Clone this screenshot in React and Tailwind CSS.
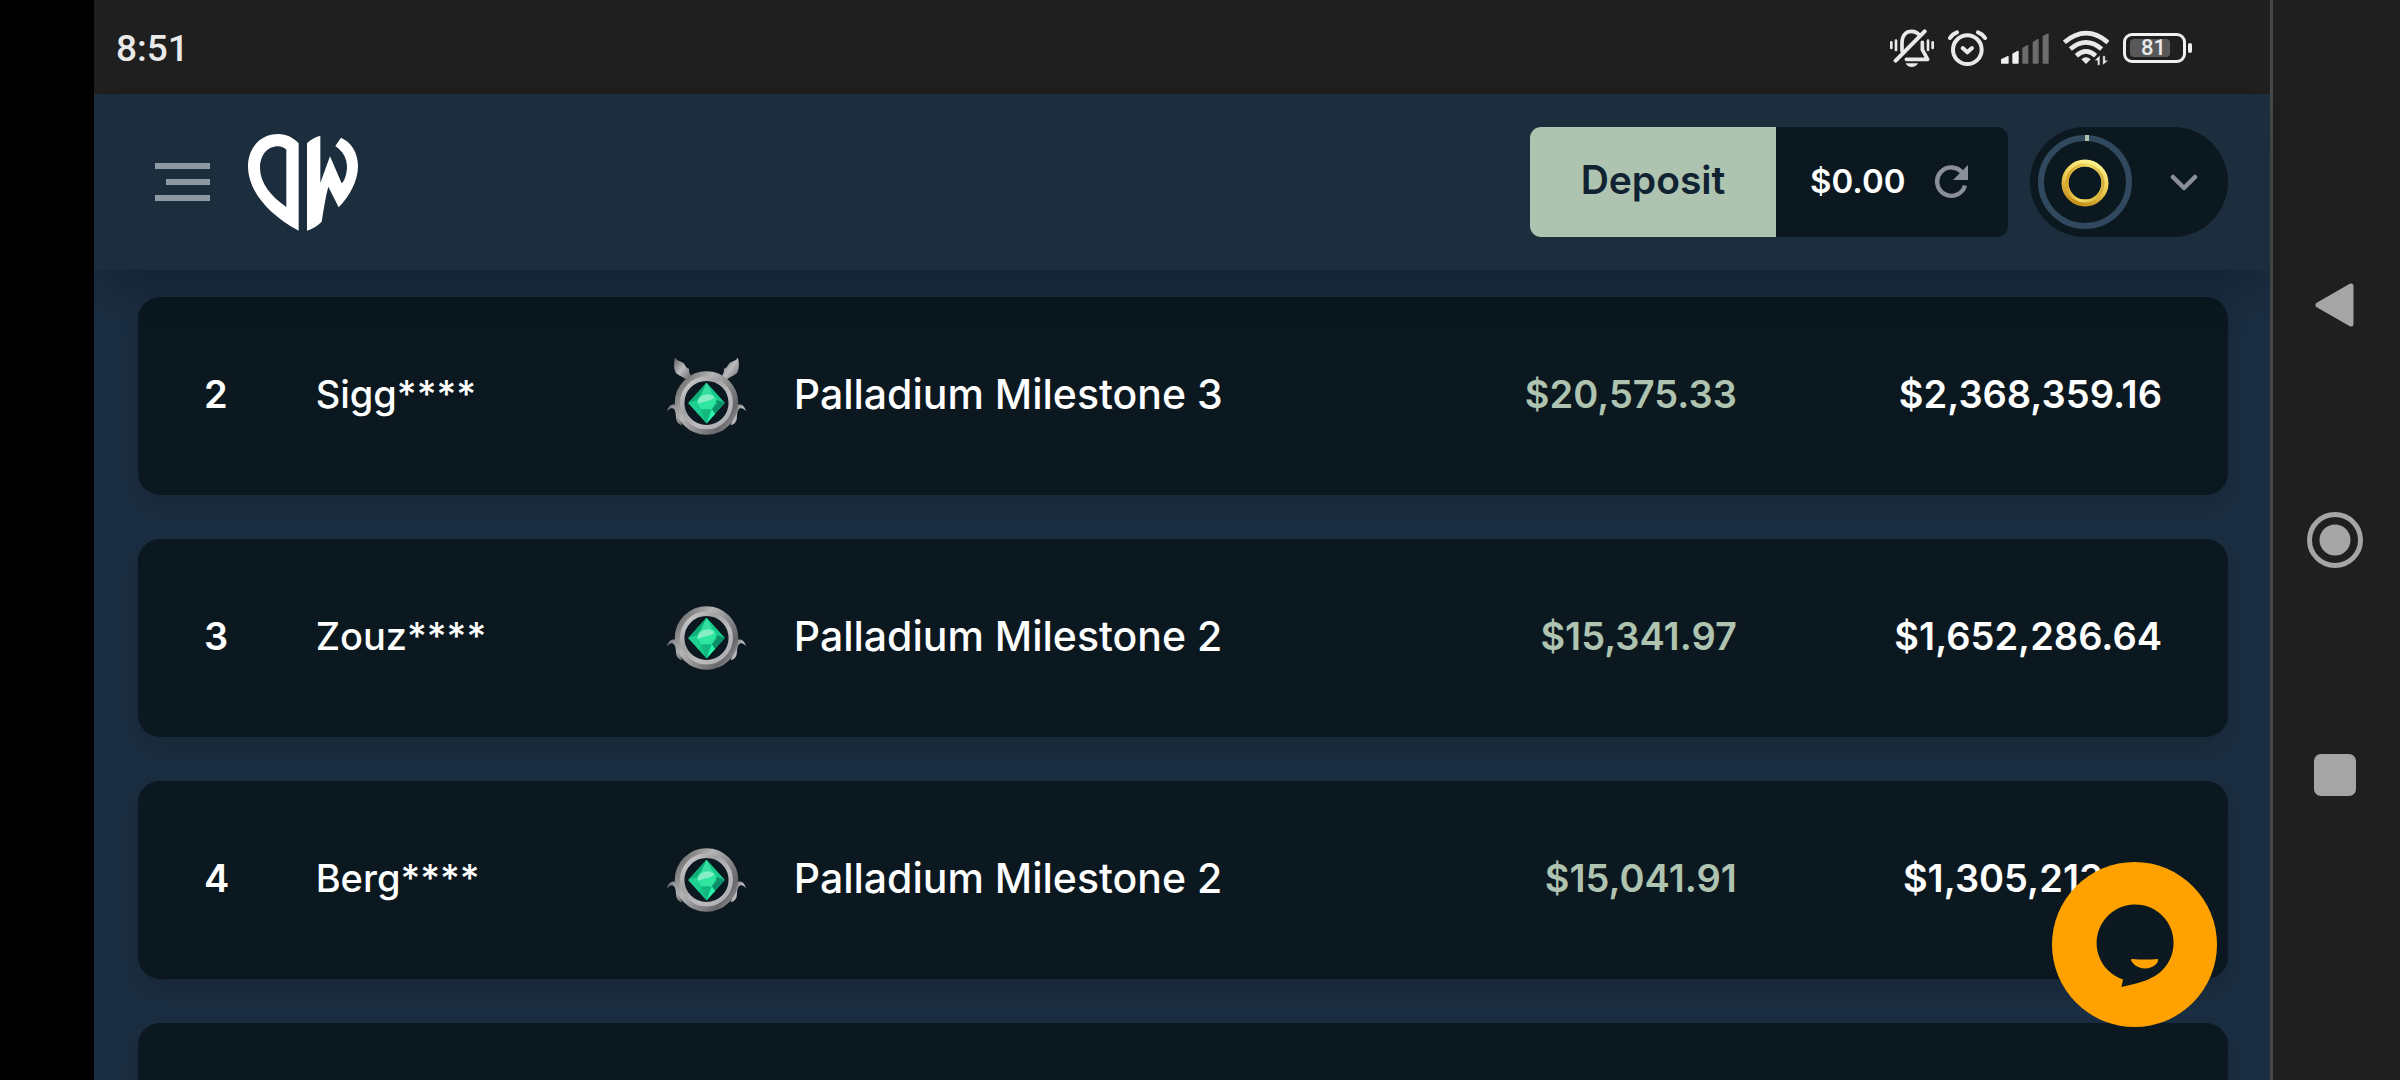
import React from "react";

const ROWS = [
  { rank: 2, name: "Sigg****", level: "Palladium Milestone 3", winged: true, prize: "$20,575.33", wagered: "$2,368,359.16" },
  { rank: 3, name: "Zouz****", level: "Palladium Milestone 2", winged: false, prize: "$15,341.97", wagered: "$1,652,286.64" },
  { rank: 4, name: "Berg****", level: "Palladium Milestone 2", winged: false, prize: "$15,041.91", wagered: "$1,305,213.39" },
  { rank: "", name: "", level: "", winged: false, prize: "", wagered: "" },
];

function MutedBell() {
  return (
    <svg width="44" height="38" viewBox="90 86 132 114" fill="none" stroke="#e9e9e9" strokeLinecap="round" strokeLinejoin="round" aria-hidden="true">
      <path d="M126 152V128C126 104 138 93 155 93C163 93 172 97 177 103" strokeWidth="11" />
      <path d="M107 181L194 93" strokeWidth="12" />
      <path d="M187 126V148L203 177H139" strokeWidth="11" />
      <path d="M137 189H174C170 197 163 200 155 200S141 197 137 189Z" fill="#e9e9e9" stroke="none" />
      <path d="M94 126V143M108 121V149M204 121V149M218 126V143" strokeWidth="8" />
    </svg>
  );
}

function Alarm() {
  return (
    <svg width="39" height="36" viewBox="267 86 117 108" fill="none" stroke="#e9e9e9" strokeLinecap="round" strokeLinejoin="round" aria-hidden="true">
      <circle cx="325" cy="145" r="43" strokeWidth="12" />
      <path d="M311 140L325 153L339 140" strokeWidth="12" />
      <path d="M273 110Q280 98 294 93M378 110Q371 98 357 93" strokeWidth="12" />
    </svg>
  );
}

function Signal() {
  return (
    <svg width="48" height="31" viewBox="423 96 144 93" aria-hidden="true">
      <g fill="#f0f0f0" stroke="#f0f0f0" strokeWidth="4" strokeLinejoin="round">
        <path d="M425 186V176L444 167V186Z" />
        <path d="M459 186V159L474 151V186Z" />
      </g>
      <g fill="#6c6c6c" stroke="#6c6c6c" strokeWidth="4" strokeLinejoin="round">
        <path d="M489 186V142L503 134V186Z" />
        <path d="M520 186V124L534 116V186Z" />
        <path d="M550 186V106L564 99V186Z" />
      </g>
    </svg>
  );
}

function Wifi() {
  return (
    <svg width="46" height="36" viewBox="605 90 138 108" fill="none" stroke="#e9e9e9" strokeWidth="14" aria-hidden="true">
      <path d="M609 127Q674 72 740 127" />
      <path d="M627 147Q674 107 721 147" />
      <path d="M645 167Q674 141 703 167" />
      <path d="M660 178Q674 166 688 178L674 192Z" fill="#e9e9e9" stroke="none" />
      <path d="M716 196V165L698 182H708V196ZM724 167V196L742 181H732V167Z" fill="#e9e9e9" stroke="#1f1f1f" strokeWidth="2" />
    </svg>
  );
}

function Battery() {
  return (
    <div className="flex items-center gap-0.5" role="img" aria-label="Battery 81%">
      <div className="flex h-[30px] w-[63px] items-center rounded-[9px] border-3 border-[#f0f0f0] px-1">
        <div className="flex h-[18px] w-10 items-center justify-end rounded-sm bg-[#595959] pr-1 text-[22px] leading-none font-medium">81</div>
      </div>
      <div className="h-2.5 w-1 rounded-full bg-[#f0f0f0]" />
    </div>
  );
}

function Logo() {
  return (
    <svg width="110" height="97" viewBox="504 402 330 291" fill="#fff" aria-hidden="true">
      <path fillRule="evenodd" d="M656 430C640 413 620 402 595 402C542 402 504 442 504 499C504 572 566 644 656 692ZM619 449V621C572 589 540 548 540 504C540 466 562 439 594 439C604 439 613 443 619 449Z" />
      <path d="M681 430Q697 413 721 407V549L750 469L785 550C792 546 801 522 801 500C801 474 788 454 766 438L783 413C813 426 834 457 834 499C834 542 809 590 776 622L745 560C736 592 731 630 725 665Q705 685 681 692Z" />
    </svg>
  );
}

function Badge({ winged }) {
  const id = winged ? "winged" : "plain";
  return (
    <svg
      width="79"
      height={winged ? 78 : 64}
      viewBox={winged ? "53 50 238 234" : "53 92 238 192"}
      className="shrink-0"
      aria-hidden="true"
    >
      <defs>
        <linearGradient id={`${id}-rim`} x1="0" y1="0.2" x2="1" y2="0.9">
          <stop offset="0" stopColor="#777" />
          <stop offset="0.3" stopColor="#b5b5b6" />
          <stop offset="0.55" stopColor="#8f8e90" />
          <stop offset="0.85" stopColor="#68676a" />
          <stop offset="1" stopColor="#8f8e90" />
        </linearGradient>
        <linearGradient id={`${id}-inner`} x1="0" y1="0" x2="1" y2="1">
          <stop offset="0" stopColor="#d6d6d8" />
          <stop offset="0.35" stopColor="#a2a1a4" />
          <stop offset="0.65" stopColor="#bdbdbf" />
          <stop offset="1" stopColor="#a9a8ab" />
        </linearGradient>
        <linearGradient id={`${id}-wing`} x1="0" y1="0" x2="1" y2="1">
          <stop offset="0" stopColor="#626164" />
          <stop offset="0.5" stopColor="#bcbbbd" />
          <stop offset="1" stopColor="#6a696c" />
        </linearGradient>
      </defs>
      {winged && (
        <g fill={`url(#${id}-wing)`}>
          <path d="M78 51C73 65 73 83 78 93C81 103 97 107 111 117L125 106C121 99 118 93 120 85C109 82 110 76 103 68C96 61 84 64 78 51Z" />
          <path d="M266 51C271 65 271 83 266 93C263 103 247 107 233 117L219 106C223 99 226 93 224 85C235 82 234 76 241 68C248 61 260 64 266 51Z" />
        </g>
      )}
      <g fill={`url(#${id}-wing)`}>
        <path d="M53 213C57 197 67 189 79 194C88 198 88 208 90 222C91 235 95 242 99 255C89 254 83 247 81 238C79 225 81 211 72 205C64 201 58 207 53 213Z" />
        <path d="M291 213C287 197 277 189 265 194C256 198 256 208 254 222C253 235 249 242 245 255C255 254 261 247 263 238C265 225 263 211 272 205C280 201 286 207 291 213Z" />
      </g>
      <circle cx="172" cy="188" r="82" fill="none" stroke={`url(#${id}-rim)`} strokeWidth="27" />
      <circle cx="172" cy="188" r="73" fill="none" stroke={`url(#${id}-inner)`} strokeWidth="13" />
      <path d="M172 127L227 188L172 250L117 188Z" fill="#14c886" />
      <path d="M172 127L157 161L142 180L117 188Z" fill="#0fae78" />
      <path d="M172 127L157 161L190 160Z" fill="#35dfa1" />
      <path d="M172 127L190 160L201 178L227 188Z" fill="#18c78b" />
      <path d="M227 188L201 178L203 190L188 207L196 222Z" fill="#0c8f69" />
      <path d="M117 188L142 180L146 204L155 207L150 224Z" fill="#20cf92" />
      <path d="M172 250L155 207H188Z" fill="#12b880" />
      <path d="M172 250L188 207L198 221Z" fill="#2bf3aa" />
      <path d="M157 161L190 160L203 178L188 207H155L142 185Z" fill="#2ee6a0" />
      <path d="M146 190C145 171 159 163 179 162L195 169C192 183 169 180 146 190Z" fill="#87edc6" />
    </svg>
  );
}

function RankRing() {
  return (
    <svg width="94" height="94" viewBox="0 0 94 94" fill="none" aria-hidden="true">
      <defs>
        <linearGradient id="gold" x1="0.7" y1="0" x2="0.3" y2="1">
          <stop offset="0" stopColor="#fbef8b" />
          <stop offset="0.45" stopColor="#efd052" />
          <stop offset="1" stopColor="#c6921e" />
        </linearGradient>
        <linearGradient id="goldInner" x1="0" y1="0.4" x2="1" y2="0.6">
          <stop offset="0" stopColor="#d8a52b" />
          <stop offset="0.5" stopColor="#f3dc62" />
          <stop offset="1" stopColor="#d3ae3d" />
        </linearGradient>
      </defs>
      <circle cx="47" cy="47" r="44" stroke="#30495e" strokeWidth="6" />
      <path d="M47 3H51" stroke="#aec3b0" strokeWidth="6" />
      <circle cx="47" cy="48" r="20" stroke="url(#gold)" strokeWidth="7" />
      <circle cx="47" cy="48" r="18" stroke="url(#goldInner)" strokeWidth="3" />
    </svg>
  );
}

function StatusBar() {
  return (
    <div className="flex h-[94px] shrink-0 items-center justify-between bg-[#1f1f1f] pt-0.5 pr-[78px] pl-[22px] font-[Roboto,sans-serif] text-[#e9e9e9]">
      <time className="text-[37px] leading-none font-medium">8:51</time>
      <div className="flex items-center gap-3.5">
        <MutedBell />
        <Alarm />
        <Signal />
        <Wifi />
        <Battery />
      </div>
    </div>
  );
}

function Header() {
  return (
    <header className="relative z-10 flex h-44 shrink-0 items-center justify-between bg-[#1c2d3e] pr-[42px] pl-[61px] shadow-[0_28px_42px_-8px_rgba(0,0,0,0.2)]">
      <div className="flex items-center gap-[38px]">
        <button type="button" aria-label="Menu" className="flex w-[55px] flex-col items-end gap-2.5">
          <span className="h-1.5 w-full bg-[#8e99a3]" />
          <span className="h-1.5 w-11 bg-[#8e99a3]" />
          <span className="h-1.5 w-full bg-[#8e99a3]" />
        </button>
        <a href="#home" aria-label="Home">
          <Logo />
        </a>
      </div>
      <div className="flex h-[110px] gap-[22px]">
        <div className="flex overflow-hidden rounded-[11px] bg-[#0b1820]">
          <button type="button" className="w-[246px] bg-[#aec3b0] pb-1 text-[39px] font-semibold text-[#112332]">
            Deposit
          </button>
          <div className="flex w-[232px] items-center justify-between pr-10 pl-[34px]">
            <span className="text-[33px] font-semibold text-white">$0.00</span>
            <button type="button" aria-label="Refresh balance">
              <svg width="34" height="34" viewBox="0 0 34 34" fill="none" aria-hidden="true">
                <path d="M29 8.500A14.200 14.200 0 1 0 31 20.500" stroke="#8a8e97" strokeWidth="4.400" />
                <path d="M34 0V15H19Z" fill="#8a8e97" />
              </svg>
            </button>
          </div>
        </div>
        <button type="button" aria-label="Account" className="flex w-[198px] items-center justify-between rounded-full bg-[#0b1820] pr-[30px] pl-2">
          <RankRing />
          <svg width="28" height="18" viewBox="0 0 28 18" fill="none" aria-hidden="true">
            <path d="M3 4L14 15L25 4" stroke="#8a8e97" strokeWidth="4.500" strokeLinecap="round" strokeLinejoin="round" />
          </svg>
        </button>
      </div>
    </header>
  );
}

function Leaderboard() {
  return (
    <main className="-mt-[17px] min-h-0 flex-1 overflow-hidden pr-[42px] pl-11">
      <table className="w-full table-fixed border-separate border-spacing-x-0 border-spacing-y-11 text-[38px] leading-[54px] font-medium whitespace-nowrap text-white">
        <colgroup>
          <col className="w-[8.5%]" />
          <col className="w-[16.8%]" />
          <col />
          <col className="w-[18%]" />
          <col className="w-[23.5%]" />
        </colgroup>
        <tbody>
          {ROWS.map((row, index) => (
            <tr key={index} className="h-[198px] rounded-[22px] shadow-[0_11px_22px_rgba(0,0,0,0.12)]">
              <td className="rounded-l-[22px] bg-[#0b1820] pb-1 pl-[66px] font-semibold">{row.rank}</td>
              <td className="bg-[#0b1820] pb-1">{row.name}</td>
              <td className="bg-[#0b1820]">
                {row.level && (
                  <div className="flex items-center gap-12">
                    <Badge winged={row.winged} />
                    <span className="pb-1 text-[41px]">{row.level}</span>
                  </div>
                )}
              </td>
              <td className="bg-[#0b1820] pb-1 text-right font-semibold text-[#aec3b0]">{row.prize}</td>
              <td className="rounded-r-[22px] bg-[#0b1820] pr-[66px] pb-1 text-right font-semibold">{row.wagered}</td>
            </tr>
          ))}
        </tbody>
      </table>
    </main>
  );
}

function ChatButton() {
  return (
    <button type="button" aria-label="Open chat" className="absolute right-[53px] bottom-[53px] z-20 size-[165px] rounded-full bg-[#ffa200]">
      <svg viewBox="0 0 165 165" aria-hidden="true">
        <path d="M71 117.500A38.500 38.500 0 1 1 99 116C92 120 81 122 69.500 125Z" fill="#0c1920" />
        <path d="M80 97Q93 98 106 97C107 101 101 106.500 93 106.500S80 101 79 98Q79 97 80 97Z" fill="#ffa200" />
      </svg>
    </button>
  );
}

function SystemNav() {
  return (
    <nav aria-label="System" className="flex w-[130px] shrink-0 flex-col items-center justify-center gap-[179px] border-l-3 border-[#464847] bg-[#1f1f1f] pr-1">
      <button type="button" aria-label="Back">
        <svg width="56" height="56" viewBox="0 0 56 56" aria-hidden="true">
          <path d="M11 28L44 9V47Z" fill="#a5a5a5" stroke="#a5a5a5" strokeWidth="5" strokeLinejoin="round" />
        </svg>
      </button>
      <button type="button" aria-label="Home">
        <svg width="56" height="56" viewBox="0 0 56 56" aria-hidden="true">
          <circle cx="28" cy="28" r="25.500" fill="none" stroke="#a5a5a5" strokeWidth="5" />
          <circle cx="28" cy="28" r="15.500" fill="#a5a5a5" />
        </svg>
      </button>
      <button type="button" aria-label="Recent apps">
        <svg width="56" height="56" viewBox="0 0 56 56" aria-hidden="true">
          <rect x="7" y="7" width="42" height="42" rx="7" fill="#a5a5a5" />
        </svg>
      </button>
    </nav>
  );
}

export default function App() {
  return (
    <div className="flex h-screen overflow-hidden bg-black pl-[94px] font-[Inter,sans-serif]">
      <div className="relative flex min-w-0 flex-1 flex-col bg-[#1b2d40]">
        <StatusBar />
        <Header />
        <Leaderboard />
        <ChatButton />
      </div>
      <SystemNav />
    </div>
  );
}
